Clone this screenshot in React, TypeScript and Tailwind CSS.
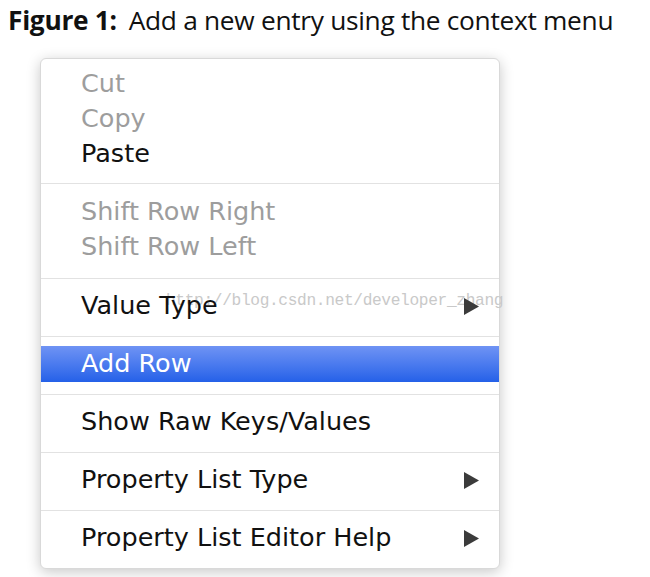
import { ReactNode } from 'react';

type Item = { label: string; disabled?: boolean; submenu?: boolean; active?: boolean };

const groups: Item[][] = [
  [{ label: 'Cut', disabled: true }, { label: 'Copy', disabled: true }, { label: 'Paste' }],
  [
    { label: 'Shift Row Right', disabled: true },
    { label: 'Shift Row Left', disabled: true },
  ],
  [{ label: 'Value Type', submenu: true }],
  [{ label: 'Add Row', active: true }],
  [{ label: 'Show Raw Keys/Values' }],
  [{ label: 'Property List Type', submenu: true }],
  [{ label: 'Property List Editor Help', submenu: true }],
];

const Arrow = ({ light }: { light?: boolean }) => (
  <svg width="15" height="17" viewBox="0 0 15 17">
    <path d="M0 0 L15 8.5 L0 17 Z" fill={light ? '#ffffff' : '#3b3b3b'} />
  </svg>
);

const Row = ({ item, children }: { item: Item; children?: ReactNode }) => (
  <div
    className={`flex items-center justify-between h-[36px] pl-[40px] pr-[20px] ${
      item.active ? 'bg-gradient-to-b from-[#6f93f4] to-[#2460e8] text-white' : ''
    } ${item.disabled ? 'text-[#9d9d9d]' : item.active ? '' : 'text-[#111111]'}`}
  >
    <span className="leading-none">{item.label}</span>
    {item.submenu && <Arrow light={item.active} />}
    {children}
  </div>
);

const App = () => {
  return (
    <div className="w-[650px] h-[577px] bg-white overflow-hidden">
      <div className="pt-[6px] pl-[8px] text-[26.3px] text-[#111] font-['Open_Sans',sans-serif] leading-[28px] tracking-[-0.3px]">
        <span className="font-bold">Figure 1:</span>
        <span className="ml-[12px]">Add a new entry using the context menu</span>
      </div>

      <div className="relative ml-[40px] mt-[24px] w-[460px] rounded-[6px] border border-[#d9d9d9] bg-white shadow-[0_3px_14px_rgba(0,0,0,0.22)] font-['DejaVu_Sans',sans-serif] text-[25.5px]">
        {/* csdn watermark baked into the screenshot */}
        <div className="absolute left-[125px] top-[230px] font-['Liberation_Mono',monospace] text-[16.2px] tracking-[-0.35px] text-[#c9c9c9] pointer-events-none whitespace-nowrap">
          http://blog.csdn.net/developer_zhang
        </div>
        {groups.map((group, gi) => (
          <div
            key={gi}
            className={`relative ${gi > 0 ? 'border-t border-[#e2e2e2]' : ''} ${
              gi === 0 ? 'pt-[7px] pb-[12px]' : 'pt-[9px] pb-[12px]'
            } ${group.length > 1 && gi > 0 ? 'pt-[10px] pb-[14px]' : ''}`}
          >
            {group.map((item) => (
              <div key={item.label} className={group.length > 1 ? 'h-[35px] overflow-hidden' : ''}>
                <Row item={item} />
              </div>
            ))}
          </div>
        ))}
      </div>
    </div>
  );
};

export default App;
